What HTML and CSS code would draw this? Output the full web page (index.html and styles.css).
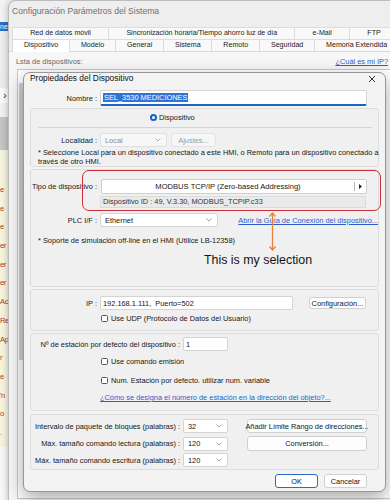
FILE: index.html
```html
<!DOCTYPE html>
<html lang="es">
<head>
    <meta charset="UTF-8">
    <meta name="viewport" content="width=device-width, initial-scale=1.0">
    <title>Propiedades del Dispositivo</title>
    <link rel="stylesheet" href="styles.css">
</head>
<body>
    <!-- app behind the settings window -->
    <div class="backapp">
        <div class="ba-top"></div>
        <div class="ba-blue">ne</div>
        <div class="ba-gray"></div>
        <div class="ba-row">&rsaquo;</div>
        <div class="ba-row2"></div>
        <div class="ba-band"></div>
        <div class="ba-notes">
            <span>e</span><span>e</span><span>e</span><span>er</span><span>er</span><span>er</span><span>Ac</span>
            <span>Re</span><span>Ap</span><span>r</span><span>e</span><span>'n</span><span>o</span><span>.</span>
        </div>
        <div class="ba-bottom"></div>
    </div>

    <div class="win">
        <div class="win-title">
            <span>Configuración Parámetros del Sistema</span>
            <svg class="win-x" width="7" height="7" viewBox="0 0 7 7"><path d="M0.5 0.5L6.5 6.5M6.5 0.5L0.5 6.5" stroke="#777" stroke-width="0.9"/></svg>
        </div>
        <div class="tabs">
            <div class="tab-row">
                <div class="tab">Red de datos móvil</div>
                <div class="tab">Sincronización horaria/Tiempo ahorro luz de día</div>
                <div class="tab">e-Mail</div>
                <div class="tab">FTP</div>
            </div>
            <div class="tab-row">
                <div class="tab active">Dispositivo</div>
                <div class="tab">Modelo</div>
                <div class="tab">General</div>
                <div class="tab">Sistema</div>
                <div class="tab">Remoto</div>
                <div class="tab">Seguridad</div>
                <div class="tab">Memoria Extendida</div>
            </div>
        </div>
        <div class="win-body">
            <div class="list-head">
                <span>Lsta de dispositivos:</span>
                <a href="#" class="link">¿Cuál es mi IP?</a>
            </div>
            <div class="devlist">
                <div class="dl-strip"></div>
            </div>
        </div>
    </div>

    <div class="dlg">
        <div class="dlg-title">
            <span>Propiedades del Dispositivo</span>
            <svg class="dlg-x" width="8" height="8" viewBox="0 0 8 8"><path d="M1 1L7 7M7 1L1 7" stroke="#333" stroke-width="1"/></svg>
        </div>

        <div class="row name-row">
            <span class="lbl">Nombre :</span>
            <div class="field name-field"><span class="sel">SEL_3530 MEDICIONES</span></div>
        </div>

        <div class="group">
            <div class="radio-row"><span class="radio"></span>Dispositivo</div>
            <div class="sep"></div>
            <div class="row loc-row">
                <span class="lbl">Localidad :</span>
                <div class="select disabled w-local">Local<svg class="chev" width="6" height="4" viewBox="0 0 6 4"><path d="M0.5 0.5L3 3L5.5 0.5" fill="none" stroke="#a0a0a0" stroke-width="0.8"/></svg></div>
                <div class="btn disabled w-ajustes">Ajustes...</div>
            </div>
            <p class="note">* Seleccione Local para un dispositivo conectado a este HMI, o Remoto para un dispositivo conectado a<br>través de otro HMI.</p>
        </div>

        <div class="group g-type">
            <div class="row type-row">
                <span class="lbl">Tipo de dispositivo :</span>
                <div class="typebtn">
                    <span class="type-name">MODBUS TCP/IP (Zero-based Addressing)</span>
                    <span class="type-arrow"><svg width="3" height="5" viewBox="0 0 3 5"><path d="M0 0L3 2.5L0 5Z" fill="#222"/></svg></span>
                </div>
            </div>
            <div class="idfield">Dispositivo ID : 49, V.3.30, MODBUS_TCPIP.c33</div>
            <div class="row plc-row">
                <span class="lbl">PLC I/F :</span>
                <div class="select w-plc">Ethernet<svg class="chev" width="6" height="4" viewBox="0 0 6 4"><path d="M0.5 0.5L3 3L5.5 0.5" fill="none" stroke="#888" stroke-width="0.8"/></svg></div>
                <a href="#" class="link guide">Abrir la Guía de Conexión del dispositivo...</a>
            </div>
            <p class="note sim">* Soporte de simulación off-line en el HMI (Utilice LB-12358)</p>
        </div>

        <div class="group g-ip">
            <div class="row ip-row">
                <span class="lbl">IP :</span>
                <div class="field w-ip">192.168.1.111,&nbsp; Puerto=502</div>
                <div class="btn w-config">Configuración...</div>
            </div>
            <div class="check-row udp"><span class="check"></span>Use UDP (Protocolo de Datos del Usuario)</div>
        </div>

        <div class="group g-station">
            <div class="row st-row">
                <span class="lbl lbl-long">Nº de estación por defecto del dispositivo :</span>
                <div class="field w-small">1</div>
            </div>
            <div class="check-row cmd"><span class="check"></span>Use comando emisión</div>
            <div class="check-row num"><span class="check"></span>Num. Estación por defecto. utilizar num. variable</div>
            <div class="link-row"><a href="#" class="link">¿Cómo se designa el número de estación en la dirección del objeto?...</a></div>
        </div>

        <div class="group g-block">
            <div class="row blk1">
                <span class="lbl lbl-long">Intervalo de paquete de bloques (palabras) :</span>
                <div class="select w-small">32<svg class="chev" width="6" height="4" viewBox="0 0 6 4"><path d="M0.5 0.5L3 3L5.5 0.5" fill="none" stroke="#888" stroke-width="0.8"/></svg></div>
                <div class="btn w-wide">Añadir Límite Rango de direcciones...</div>
            </div>
            <div class="row blk2">
                <span class="lbl lbl-long">Máx. tamaño comando lectura (palabras) :</span>
                <div class="select w-small">120<svg class="chev" width="6" height="4" viewBox="0 0 6 4"><path d="M0.5 0.5L3 3L5.5 0.5" fill="none" stroke="#888" stroke-width="0.8"/></svg></div>
                <div class="btn w-wide">Conversión...</div>
            </div>
            <div class="row blk3">
                <span class="lbl lbl-long">Máx. tamaño comando escritura (palabras) :</span>
                <div class="select w-small">120<svg class="chev" width="6" height="4" viewBox="0 0 6 4"><path d="M0.5 0.5L3 3L5.5 0.5" fill="none" stroke="#888" stroke-width="0.8"/></svg></div>
            </div>
        </div>

        <div class="dlg-buttons">
            <div class="btn w-ok default">OK</div>
            <div class="btn w-ok">Cancelar</div>
        </div>
    </div>

    <!-- annotation drawn on the screenshot -->
    <div class="mark-box"></div>
    <svg class="mark-arrow" width="9" height="39" viewBox="0 0 9 39">
        <path d="M4.5 1V38M1.5 4.5L4.5 1L7.5 4.5M1.5 34.5L4.5 38L7.5 34.5" fill="none" stroke="#e5823f" stroke-width="1.3"/>
    </svg>
    <div class="mark-text">This is my selection</div>
</body>
</html>
```

FILE: styles.css
```css
* {
    box-sizing: border-box;
}
body {
    margin: 0;
    width: 390px;
    height: 500px;
    overflow: hidden;
    position: relative;
    background: #f4f4f4;
    font-family: "Liberation Sans", Arial, sans-serif;
    font-size: 7.4px;
    color: #161616;
}
p {
    margin: 0;
}

/* app behind */
.backapp {
    position: absolute;
    left: 0;
    top: 0;
    width: 8px;
    height: 500px;
    display: flex;
    flex-direction: column;
    overflow: hidden;
}
.ba-top {
    height: 22px;
    background: #f2f2f2;
}
.ba-blue {
    height: 9px;
    background: #2d6cc0;
    color: #fff;
    font-size: 7px;
    line-height: 9px;
}
.ba-gray {
    height: 57px;
    background: #ececec;
}
.ba-row {
    height: 15px;
    background: #fafafa;
    color: #333;
    font-size: 11px;
    line-height: 14px;
    padding-left: 3px;
}
.ba-row2 {
    height: 14px;
    background: #f0f0f0;
}
.ba-band {
    height: 33px;
    background: #c4c4c4;
}
.ba-notes {
    height: 297px;
    background: #f5f3dc;
    padding-top: 31px;
    display: flex;
    flex-direction: column;
    color: #b03a2c;
    font-size: 7.6px;
    letter-spacing: -0.4px;
}
.ba-notes span {
    height: 18.7px;
    line-height: 18.7px;
    white-space: nowrap;
}
.ba-bottom {
    flex: 1;
    background: #f7f7f7;
}

/* settings window */
.win {
    position: absolute;
    left: 8px;
    top: 0;
    width: 392px;
    height: 510px;
    background: #eeeeee;
    border: 1px solid #bcbcbc;
    border-radius: 8px 8px 0 0;
    box-shadow: 0 0 6px rgba(0, 0, 0, 0.25);
    overflow: hidden;
}
.win-title {
    height: 22px;
    padding: 4px 0 0 3px;
    display: flex;
    justify-content: space-between;
    font-size: 8.6px;
    line-height: 12px;
    color: #707070;
}
.win-x {
    margin: 3px 1px 0 0;
}
.tabs {
    padding: 4px 0 0 3px;
}
.tab-row {
    display: flex;
    height: 12px;
}
.tab {
    flex: 1 1 auto;
    text-align: center;
    white-space: nowrap;
    font-size: 7.1px;
    line-height: 11px;
    background: #f9f9f9;
    border-top: 1px solid #dcdcdc;
    border-right: 1px solid #dcdcdc;
    color: #222;
}
.tab-row .tab:first-child {
    border-left: 1px solid #dcdcdc;
}
.tab.active {
    background: #fff;
    height: 13px;
    position: relative;
    z-index: 1;
}
.win-body {
    border-top: 1px solid #d8d8d8;
    background: #f7f7f7;
    height: 460px;
}
.list-head {
    display: flex;
    justify-content: space-between;
    padding: 5px 11px 0 7px;
    line-height: 10px;
    color: #666;
}
.link {
    color: #2a5fcc;
    text-decoration: underline;
    white-space: nowrap;
}
.devlist {
    margin: 2px 0 0 8px;
    height: 430px;
    border: 1px solid #c9c9c9;
    background: #fff;
    padding: 13px 0 0 1px;
}
.dl-strip {
    width: 5px;
    height: 277px;
    background: #d2d2d2;
}

/* device properties dialog */
.dlg {
    position: absolute;
    left: 23px;
    top: 72px;
    width: 363px;
    height: 420px;
    padding: 0 6px;
    background: #f3f3f3;
    border: 1px solid #979797;
    border-radius: 7px;
    box-shadow: 0 6px 18px rgba(0, 0, 0, 0.35);
}
.dlg-title {
    height: 11px;
    display: flex;
    justify-content: space-between;
    align-items: center;
    font-size: 8.4px;
    line-height: 11px;
    color: #111;
}
.dlg-x {
    margin-right: 3px;
}
.row {
    display: flex;
    align-items: center;
}
.lbl {
    flex: none;
    width: 66px;
    margin-right: 3px;
    text-align: right;
    white-space: nowrap;
}
.lbl-long {
    width: 149px;
}
.field {
    height: 100%;
    display: flex;
    align-items: center;
    padding: 0 2px;
    background: #fff;
    border: 1px solid #d4d4d4;
    border-radius: 2px;
    white-space: nowrap;
}
.select {
    height: 14px;
    display: flex;
    justify-content: space-between;
    align-items: center;
    padding: 0 5px 0 4px;
    background: #fff;
    border: 1px solid #d4d4d4;
    border-radius: 2px;
}
.select.disabled {
    background: #f7f7f7;
    color: #8c8c8c;
    border-color: #e0e0e0;
}
.btn {
    height: 100%;
    display: flex;
    align-items: center;
    justify-content: center;
    background: #fdfdfd;
    border: 1px solid #d0d0d0;
    border-radius: 3px;
    white-space: nowrap;
}
.btn.disabled {
    color: #9a9a9a;
    background: #f6f6f6;
    border-color: #e3e3e3;
}
.name-row {
    margin-top: 6px;
    height: 16px;
    padding-left: 1px;
}
.name-field {
    width: 267px;
    border-bottom: 2px solid #1b64c4;
}
.sel {
    background: #2f74d6;
    color: #fff;
    padding: 0 1px;
    line-height: 9px;
}
.group {
    background: #f0f0f0;
    border: 1px solid #dcdcdc;
    border-radius: 3px;
    margin-top: 2px;
}
.radio-row {
    margin-top: 2px;
    height: 12px;
    display: flex;
    align-items: center;
    padding-left: 119px;
}
.radio {
    width: 7px;
    height: 7px;
    border-radius: 50%;
    background: #fff;
    border: 2px solid #1b5fc0;
    margin-right: 2px;
}
.sep {
    margin: 4px 6px 0 7px;
    height: 1px;
    background: #d6d6d6;
}
.loc-row {
    margin-top: 5px;
    height: 14px;
}
.w-local {
    width: 67px;
}
.w-ajustes {
    width: 45px;
    margin-left: 4px;
}
.note {
    margin: 1px 12px 0 7px;
    line-height: 9px;
    white-space: nowrap;
}
.g-type {
    height: 118px;
}
.type-row {
    margin-top: 9px;
    height: 15px;
}
.typebtn {
    width: 266px;
    height: 100%;
    display: flex;
    margin-left: 1px;
    background: #fff;
    border: 1px solid #cfcfcf;
    border-radius: 2px;
}
.type-name {
    flex: 1;
    text-align: center;
    line-height: 13px;
    font-size: 7.6px;
}
.type-arrow {
    width: 12px;
    display: flex;
    align-items: center;
    justify-content: center;
    border-left: 1px solid #b5b5b5;
    margin: 2px 0;
}
.idfield {
    width: 266px;
    height: 12px;
    margin: 2px 0 0 69px;
    padding-left: 2px;
    line-height: 10px;
    background: #eaeaea;
    border: 1px solid #dcdcdc;
    color: #333;
}
.plc-row {
    margin-top: 4px;
    height: 16px;
}
.w-plc {
    width: 125px;
}
.guide {
    margin-left: 20px;
}
.sim {
    margin-top: 8px;
}
.ip-row {
    margin-top: 6px;
    height: 14px;
}
.w-ip {
    width: 193px;
}
.w-config {
    width: 57px;
    height: 12px;
    margin-left: 16px;
}
.check-row {
    height: 13px;
    display: flex;
    align-items: center;
    padding-left: 70px;
}
.check {
    width: 7px;
    height: 7px;
    border: 1px solid #555;
    border-radius: 1.5px;
    background: #fff;
    margin-right: 3px;
}
.udp {
    margin-top: 2px;
    margin-bottom: 5px;
}
.st-row {
    margin-top: 3px;
    height: 14px;
}
.w-small {
    width: 45px;
}
.cmd {
    margin-top: 4px;
}
.num {
    margin-top: 6px;
}
.link-row {
    margin-top: 4px;
    height: 13px;
    line-height: 13px;
    padding-left: 69px;
    margin-bottom: 6px;
}
.g-block {
    margin-top: 3px;
    padding-bottom: 2px;
}
.blk1 {
    margin-top: 4px;
    height: 14px;
}
.blk2 {
    margin-top: 3px;
    height: 15px;
}
.blk3 {
    margin-top: 2px;
    height: 14px;
}
.w-wide {
    width: 120px;
    margin-left: 19px;
}
.dlg-buttons {
    margin-top: 4px;
    height: 14px;
    display: flex;
    justify-content: flex-end;
    gap: 6px;
    padding-right: 12px;
}
.w-ok {
    width: 43px;
}
.btn.default {
    background: #fff;
    border-color: #2b6bc8;
}

/* annotation */
.mark-box {
    position: absolute;
    left: 82px;
    top: 170px;
    width: 299px;
    height: 41px;
    border: 1.5px solid #c9303a;
    border-radius: 7px;
}
.mark-arrow {
    position: absolute;
    left: 268px;
    top: 212px;
}
.mark-text {
    position: absolute;
    left: 204px;
    top: 253px;
    font-size: 12.4px;
    line-height: 14px;
    color: #141414;
}
```
